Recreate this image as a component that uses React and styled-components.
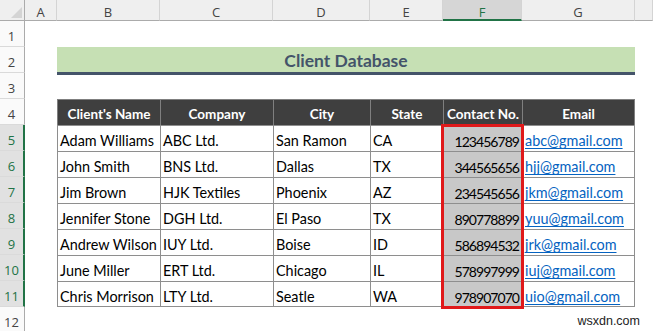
import React from "react";
import styled, { createGlobalStyle } from "styled-components";

const GlobalStyle = createGlobalStyle`
  html, body { margin: 0; padding: 0; background: #ffffff; }
  body { font-family: Lato, "Liberation Sans", sans-serif; }
  * { box-sizing: border-box; }
`;

const TABLE_COLS = "103px 113px 97px 73px 79px 113px";

const Sheet = styled.div`
  display: grid;
  grid-template-columns: 25px 32px ${TABLE_COLS} 1fr;
  grid-template-rows: 21px repeat(12, 26px);
  width: 653px;
  height: 331px;
  overflow: hidden;
  background: #ffffff;
`;

const Corner = styled.div`
  grid-column: 1;
  grid-row: 1;
  background: #efefef;
  border-right: 1px solid #ababab;
  border-bottom: 1px solid #ababab;
  display: flex;
  justify-content: flex-end;
  align-items: flex-end;
  padding: 0 2px 2px 0;
`;

const ColHeader = styled.div`
  grid-row: 1;
  grid-column: ${(p) => p.$col};
  background: ${(p) => (p.$active ? "#d6d6d6" : "#efefef")};
  color: ${(p) => (p.$active ? "#217346" : "#444444")};
  border-right: 1px solid #d4d4d4;
  border-bottom: ${(p) => (p.$active ? "2px solid #217346" : "1px solid #ababab")};
  font-family: "Open Sans", sans-serif;
  font-size: 13px;
  line-height: 1;
  display: flex;
  justify-content: center;
  align-items: center;
  padding-top: 5px;
`;

const RowHeader = styled.div`
  grid-column: 1;
  grid-row: ${(p) => p.$row};
  background: ${(p) => (p.$active ? "#e1e1e1" : "#fafafa")};
  color: ${(p) => (p.$active ? "#217346" : "#444444")};
  border-bottom: 1px solid #dadada;
  border-right: ${(p) => (p.$active ? "2px solid #217346" : "1px solid #ababab")};
  font-family: "Open Sans", sans-serif;
  font-size: 13px;
  line-height: 1;
  display: flex;
  justify-content: center;
  align-items: flex-end;
  padding: 0 ${(p) => (p.$active ? "0" : "1px")} 3px 0;
`;

const Title = styled.div`
  grid-column: 3 / 9;
  grid-row: 3;
  align-self: start;
  height: 28px;
  background: #c6e0b4;
  border-bottom: 3px solid #44546a;
  color: #44546a;
  font-family: Lato, sans-serif;
  font-weight: 700;
  font-size: 17.5px;
  display: flex;
  align-items: center;
  justify-content: center;
  padding-top: 1px;
`;

const Table = styled.div`
  grid-column: 3 / 9;
  grid-row: 5 / 13;
  display: grid;
  grid-template-columns: ${TABLE_COLS};
  grid-auto-rows: 26px;
  font-family: Lato, sans-serif;
  font-size: 14.4px;
`;

const HeadCell = styled.div`
  background: #3f3f3f;
  color: #ffffff;
  font-weight: 700;
  font-size: 13.5px;
  border-left: 1px solid #7f7f7f;
  border-top: 1px solid #7f7f7f;
  border-right: ${(p) => (p.$last ? "1px solid #7f7f7f" : "none")};
  display: flex;
  align-items: center;
  justify-content: center;
  white-space: nowrap;
  padding-top: 3px;
`;

const Cell = styled.div`
  grid-column: ${(p) => p.$col};
  grid-row: ${(p) => p.$row};
  background: ${(p) => (p.$shade ? "#c8c8c8" : "#ffffff")};
  color: #000000;
  border-left: 1px solid #8e8e8e;
  border-top: 1px solid #8e8e8e;
  border-right: ${(p) => (p.$last ? "1px solid #8e8e8e" : "none")};
  border-bottom: ${(p) => (p.$lastRow ? "1px solid #8e8e8e" : "none")};
  display: flex;
  align-items: flex-end;
  justify-content: ${(p) => (p.$right ? "flex-end" : "flex-start")};
  padding: 0 ${(p) => (p.$right ? "3px" : "0")} ${(p) => (p.$lastRow ? "0" : "1px")} ${(p) => (p.$right ? "0" : "2px")};
  white-space: nowrap;
  overflow: visible;
  line-height: 1.15;
`;

const Digits = styled.span`
  font-size: 14px;
  letter-spacing: -0.95px;
`;

const Link = styled.a`
  color: #0563c1;
  text-decoration: underline;
  text-underline-offset: 2px;
`;

const Selection = styled.div`
  grid-column: 5;
  grid-row: 2 / 9;
  margin: -1px -2px -2px -2px;
  border: 3px solid #e0191a;
  pointer-events: none;
  z-index: 2;
`;

const Watermark = styled.div`
  grid-column: 8 / 10;
  grid-row: 13;
  display: flex;
  justify-content: flex-end;
  align-items: flex-end;
  padding: 0 13px 5px 0;
  font-family: "Liberation Sans", Arial, sans-serif;
  font-size: 12.5px;
  color: #222222;
`;

const COLS = ["A", "B", "C", "D", "E", "F", "G", ""];
const HEADERS = ["Client's Name", "Company", "City", "State", "Contact No.", "Email"];
const ROWS = [
  ["Adam Williams", "ABC Ltd.", "San Ramon", "CA", "123456789", "abc@gmail.com"],
  ["John Smith", "BNS Ltd.", "Dallas", "TX", "344565656", "hjj@gmail.com"],
  ["Jim Brown", "HJK Textiles", "Phoenix", "AZ", "234545656", "jkm@gmail.com"],
  ["Jennifer Stone", "DGH Ltd.", "El Paso", "TX", "890778899", "yuu@gmail.com"],
  ["Andrew Wilson", "IUY Ltd.", "Boise", "ID", "586894532", "jrk@gmail.com"],
  ["June Miller", "ERT Ltd.", "Chicago", "IL", "578997999", "iuj@gmail.com"],
  ["Chris Morrison", "LTY Ltd.", "Seatle", "WA", "978907070", "uio@gmail.com"],
];

export default function App() {
  return (
    <>
      <GlobalStyle />
      <Sheet>
        <Corner>
          <svg width="11" height="11" viewBox="0 0 11 11">
            <polygon points="11,0 11,11 0,11" fill="#d4d4d4" />
          </svg>
        </Corner>
        {COLS.map((c, i) => (
          <ColHeader key={i} $col={i + 2} $active={c === "F"}>
            {c}
          </ColHeader>
        ))}
        {Array.from({ length: 12 }, (_, i) => (
          <RowHeader key={i} $row={i + 2} $active={i + 1 >= 5 && i + 1 <= 11}>
            {i + 1}
          </RowHeader>
        ))}
        <Title>Client Database</Title>
        <Table>
          {HEADERS.map((h, i) => (
            <HeadCell key={h} $last={i === HEADERS.length - 1}>
              {h}
            </HeadCell>
          ))}
          {ROWS.map((r, ri) =>
            r.map((v, ci) => (
              <Cell
                key={ri + "-" + ci}
                $col={ci + 1}
                $row={ri + 2}
                $right={ci === 4}
                $shade={ci === 4}
                $last={ci === 5}
                $lastRow={ri === ROWS.length - 1}
              >
                {ci === 5 ? (
                  <Link href="#">{v}</Link>
                ) : ci === 4 ? (
                  <Digits>{v}</Digits>
                ) : (
                  v
                )}
              </Cell>
            ))
          )}
          <Selection />
        </Table>
        <Watermark>wsxdn.com</Watermark>
      </Sheet>
    </>
  );
}
